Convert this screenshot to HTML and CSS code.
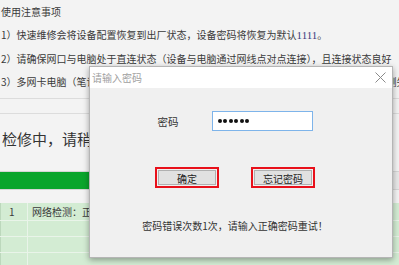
FILE: index.html
```html
<!DOCTYPE html>
<html lang="zh-CN">

<head>
    <meta charset="UTF-8">
    <title>快速维修</title>
    <link rel="stylesheet" href="styles.css">
</head>

<body>
    <main class="page">
        <section class="notes">
            <p>使用注意事项</p>
            <p>1）快速维修会将设备配置恢复到出厂状态，设备密码将恢复为默认<span class="num">1111</span>。</p>
            <p>2）请确保网口与电脑处于直连状态（设备与电脑通过网线点对点连接），且连接状态良好</p>
            <p>3）多网卡电脑（笔记本电脑等）请禁用其他网卡，仅保留连接设备的网卡，否则可能检测失败</p>
        </section>
        <hr class="rule first">
        <hr class="rule">
        <h2 class="status">检修中，请稍后...</h2>
        <div class="progress">
            <div class="progress-fill" style="width: 62%;"></div>
        </div>
        <table class="result">
            <tr>
                <td class="idx">1</td>
                <td>网络检测：正在检测设备网络连接状态...</td>
            </tr>
            <tr><td class="idx"></td><td></td></tr>
            <tr><td class="idx"></td><td></td></tr>
            <tr><td class="idx"></td><td></td></tr>
        </table>
    </main>

    <div class="dialog">
        <div class="dialog-title">
            <span>请输入密码</span>
            <svg class="close" width="11" height="11" viewBox="0 0 11 11">
                <path d="M0.5 0.5 L10.5 10.5 M10.5 0.5 L0.5 10.5" stroke="#8a8a8a" stroke-width="1" fill="none" />
            </svg>
        </div>
        <div class="dialog-body">
            <div class="field">
                <label for="pwd">密码</label>
                <div class="pwd-box" id="pwd">
                    <i></i><i></i><i></i><i></i><i></i><i></i>
                </div>
            </div>
            <div class="actions">
                <div class="mark"><button type="button">确定</button></div>
                <div class="mark"><button type="button">忘记密码</button></div>
            </div>
            <p class="error">密码错误次数1次，请输入正确密码重试！</p>
        </div>
    </div>
</body>

</html>
```

FILE: styles.css
```css
* {
    box-sizing: border-box;
}

body {
    margin: 0;
    padding: 0;
    width: 399px;
    height: 265px;
    overflow: hidden;
    background-color: #f3f3f3;
    font-family: "Noto Sans CJK SC", "Noto Sans", sans-serif;
    font-size: 10px;
    color: #3a3a3a;
    position: relative;
}

.page {
    display: flex;
    flex-direction: column;
}

.notes p {
    margin: 0;
    padding-left: 1px;
    line-height: 23px;
    white-space: nowrap;
    overflow: hidden;
}

.num {
    color: #3b3b7e;
    font-family: "Liberation Serif", serif;
    font-size: 11px;
}

.rule {
    width: 100%;
    margin: 0;
    border: none;
    border-top: 1px solid #dcdcdc;
}

.rule.first {
    margin-top: 5px;
    margin-bottom: 14px;
}

.status {
    margin: 15px 0 0 2px;
    font-size: 15px;
    font-weight: normal;
    line-height: 20px;
    color: #333;
    white-space: nowrap;
}

.progress {
    margin-top: 22px;
    height: 19px;
    border-top: 1px solid #d6d6d6;
    border-bottom: 1px solid #d6d6d6;
    background-color: #e8e8e8;
}

.progress-fill {
    height: 100%;
    background-color: #0aa52c;
}

.result {
    margin-top: 13px;
    width: 100%;
    border-collapse: collapse;
    background-color: #d3ecd3;
    border-left: 1px solid #bcd8bc;
}

.result td {
    height: 16px;
    padding: 0 0 0 4px;
    border-bottom: 1px solid #e9f4e9;
    line-height: 15px;
    white-space: nowrap;
}

.result tr:first-child td {
    height: 17px;
}

.result .idx {
    width: 27px;
    padding-left: 8px;
    border-right: 1px solid #e9f4e9;
}

/* password dialog */
.dialog {
    position: absolute;
    left: 89px;
    top: 66px;
    width: 304px;
    height: 192px;
    display: flex;
    flex-direction: column;
    border: 1px solid #b5b5b5;
    background-color: #f0f0f0;
    box-shadow: 0 2px 6px rgba(0, 0, 0, 0.35);
}

.dialog-title {
    height: 21px;
    display: flex;
    align-items: center;
    justify-content: space-between;
    padding: 0 6px 0 2px;
    background-color: #fff;
    color: #a0a0a0;
}

.dialog-body {
    flex: 1;
    display: flex;
    flex-direction: column;
    align-items: center;
    padding-right: 12px;
}

.field {
    display: flex;
    align-items: center;
    gap: 33px;
    margin-top: 23px;
    color: #333;
}

.field label {
    font-size: 10.5px;
}

.pwd-box {
    width: 101px;
    height: 20px;
    display: flex;
    align-items: center;
    gap: 1.6px;
    padding-left: 5px;
    background-color: #fff;
    border: 1px solid #7eb4ea;
}

.pwd-box i {
    width: 4px;
    height: 4px;
    border-radius: 50%;
    background-color: #111;
}

.actions {
    display: flex;
    gap: 32px;
    margin-top: 36px;
}

.mark {
    width: 64px;
    height: 21px;
    padding: 1px;
    border: 2px solid #e8101a;
    display: flex;
}

.mark button {
    flex: 1;
    margin: 0;
    padding: 0;
    border: 1px solid #b0b0b0;
    background-color: #e1e1e1;
    font-family: inherit;
    font-size: 10px;
    color: #222;
}

.error {
    margin: 31px 0 0;
    line-height: 14px;
    color: #333;
}
```
